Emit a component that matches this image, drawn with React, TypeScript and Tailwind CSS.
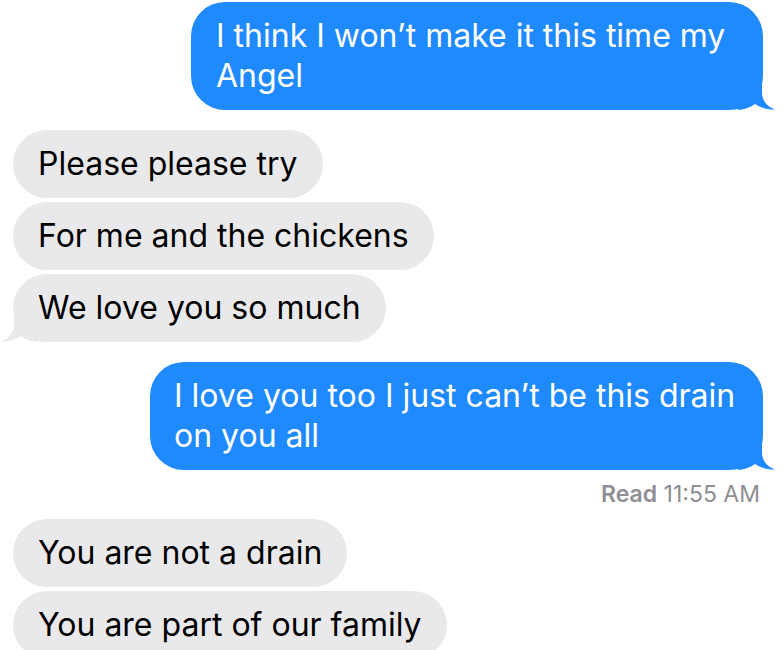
import React from 'react';

type Msg = { from: 'me' | 'them'; text: string; tail?: boolean };

const Tail = ({ color, side }: { color: string; side: 'left' | 'right' }) => (
  <svg
    width="38"
    height="30"
    viewBox="0 0 38 30"
    className={
      side === 'right'
        ? 'absolute bottom-0 right-[-13px]'
        : 'absolute bottom-0 left-[-13px] -scale-x-100'
    }
  >
    <path d="M0,0 H24 V12 C24,20 28,26 37,29.5 C31,30 23,28 17,24 C13,27 7,29.5 0,30 Z" fill={color} />
  </svg>
);

const Bubble = ({ msg }: { msg: Msg }) => {
  const mine = msg.from === 'me';
  return (
    <div className={mine ? 'flex justify-end pr-[21px]' : 'flex justify-start pl-[13px]'}>
      <div
        className={
          mine
            ? 'relative rounded-[34px] bg-[#1f8afe] px-[25px] py-[14px] text-white'
            : 'relative rounded-[34px] bg-[#e9e9eb] px-[25px] py-[14px] text-black'
        }
      >
        <p className="relative z-10 text-[32px] leading-[40px]">{msg.text}</p>
        {msg.tail && <Tail color={mine ? '#1f8afe' : '#e9e9eb'} side={mine ? 'right' : 'left'} />}
      </div>
    </div>
  );
};

export default function App() {
  return (
    <div className="h-[650px] w-[784px] overflow-hidden bg-white pt-[2px] font-['Inter',sans-serif]">
      <div className="flex flex-col">
        <div className="flex justify-end pr-[21px]">
          <div className="relative w-[572px] rounded-[34px] bg-[#1f8afe] px-[25px] py-[14px] text-white">
            <p className="relative z-10 text-[32px] leading-[40px]">I think I won’t make it this time my Angel</p>
            <Tail color="#1f8afe" side="right" />
          </div>
        </div>

        <div className="mt-[20px] flex flex-col gap-[4px]">
          <Bubble msg={{ from: 'them', text: 'Please please try' }} />
          <Bubble msg={{ from: 'them', text: 'For me and the chickens' }} />
          <Bubble msg={{ from: 'them', text: 'We love you so much', tail: true }} />
        </div>

        <div className="mt-[20px] flex justify-end pr-[21px]">
          <div className="relative w-[613px] rounded-[34px] bg-[#1f8afe] px-[24px] py-[14px] text-white">
            <p className="relative z-10 text-[32px] leading-[40px]">I love you too I just can’t be this drain on you all</p>
            <Tail color="#1f8afe" side="right" />
          </div>
        </div>

        <div className="mt-[11px] pr-[24px] text-right text-[23px] leading-[26px] text-[#8e8e93]">
          <span className="font-semibold">Read</span> 11:55 AM
        </div>

        <div className="mt-[12px] flex flex-col gap-[4px]">
          <Bubble msg={{ from: 'them', text: 'You are not a drain' }} />
          <Bubble msg={{ from: 'them', text: 'You are part of our family' }} />
        </div>
      </div>
    </div>
  );
}
